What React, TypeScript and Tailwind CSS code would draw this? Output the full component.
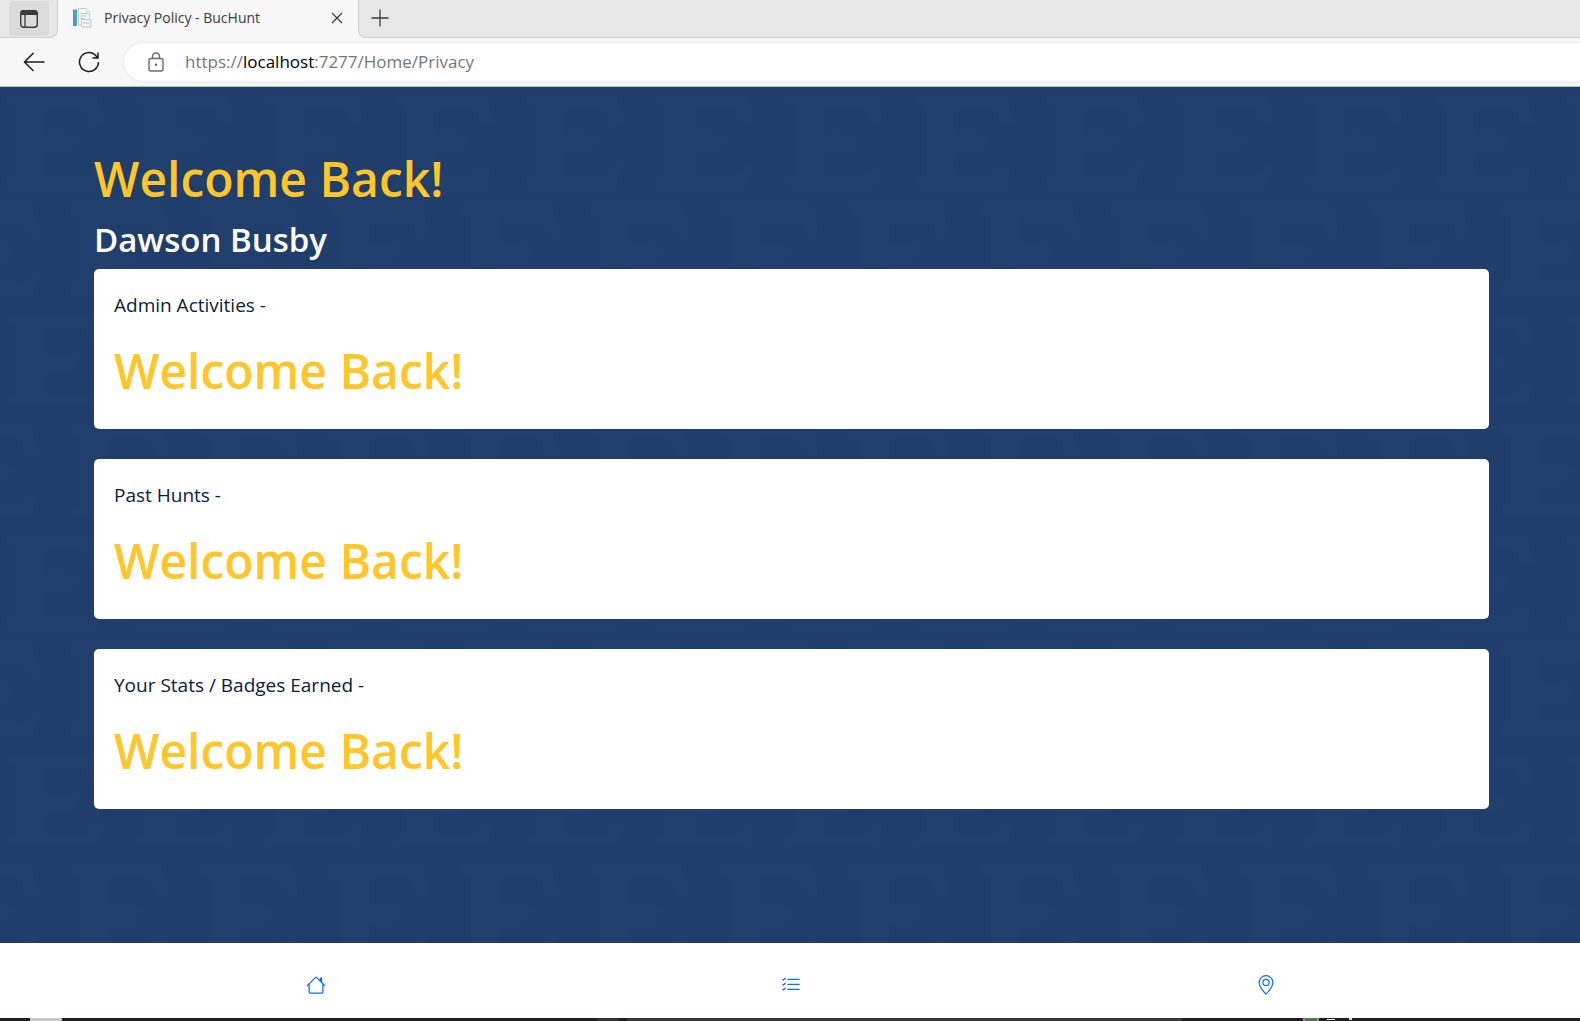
import React from "react";
import { BsHouse, BsListCheck, BsGeoAlt } from "react-icons/bs";

const cards = ["Admin Activities -", "Past Hunts -", "Your Stats / Badges Earned -"];

const tabs = [
  { label: "Home", Icon: BsHouse },
  { label: "Hunts", Icon: BsListCheck },
  { label: "Map", Icon: BsGeoAlt },
];

function TabActionsIcon() {
  return (
    <svg width="20" height="20" viewBox="0 0 20 20" aria-hidden="true">
      <rect x="1.75" y="1.75" width="16.5" height="16.5" rx="3" fill="none" stroke="#3b3b3b" strokeWidth="1.4" />
      <path d="M1.5 6V4a3 3 0 0 1 3-3h11a3 3 0 0 1 3 3v2z" fill="#3b3b3b" />
      <path d="M6 6v12" stroke="#3b3b3b" strokeWidth="1.3" />
    </svg>
  );
}

function PageIcon() {
  return (
    <svg width="20" height="20" viewBox="0 0 20 20" aria-hidden="true">
      <path d="M6.5 .5h8l3 3V17h-11z" fill="#fafafa" stroke="#c9cdd3" />
      <path d="M8.5 5.5h6M8.5 8h6M8.5 10.5h4" stroke="#b9bfc8" />
      <path d="M1 2h4v16H1z" fill="#4a9bd0" />
      <path d="M1 1.5h4" stroke="#a9cfe6" />
      <path d="M9.5 11.5H19V19H9.5z" fill="#f4f4f6" stroke="#c4c7cf" />
      <path d="M11 15h6.5M14.5 3v3h3" fill="none" stroke="#c4c7cf" />
    </svg>
  );
}

function CloseIcon() {
  return (
    <svg width="12" height="12" viewBox="0 0 12 12" fill="none" stroke="#3b3b3b" strokeWidth="1.2" aria-hidden="true">
      <path d="M1 1l10 10M11 1L1 11" />
    </svg>
  );
}

function PlusIcon() {
  return (
    <svg width="18" height="18" viewBox="0 0 18 18" fill="none" stroke="#3b3b3b" strokeWidth="1.3" aria-hidden="true">
      <path d="M9 .5v17M.5 9h17" />
    </svg>
  );
}

function BackIcon() {
  return (
    <svg width="22" height="20" viewBox="0 0 22 20" fill="none" stroke="#1b1b1b" strokeWidth="1.5" aria-hidden="true">
      <path d="M21.5 10H1.5M10.5 1L1.5 10l9 9" />
    </svg>
  );
}

function RefreshIcon() {
  return (
    <svg width="22" height="22" viewBox="0 0 22 22" fill="none" stroke="#1b1b1b" strokeWidth="1.5" aria-hidden="true">
      <path d="M20.5 11a9.5 9.5 0 1 1-4-7.7L19.5 6.5M20 1.5V7h-5.5" />
    </svg>
  );
}

function LockIcon() {
  return (
    <svg width="18" height="20" viewBox="0 0 18 20" fill="none" stroke="#6b6b6b" strokeWidth="1.4" aria-hidden="true">
      <rect x="2" y="6.5" width="14" height="12.5" rx="2" />
      <path d="M5.5 6.5v-2a3.5 3.5 0 0 1 7 0v2" />
      <circle cx="9" cy="12.8" r="1.3" fill="#6b6b6b" stroke="none" />
    </svg>
  );
}

function Backdrop() {
  return (
    <svg className="absolute inset-0 h-full w-full" aria-hidden="true">
      <defs>
        <pattern id="texture" width="130" height="220" patternUnits="userSpaceOnUse">
          <g fill="#203f6c">
            <path d="M5 8h92l8 30H93L83 21H45v26h20l15 5-13 14H45v22h40l18-14-5 25H5v-10h10V18H5z" />
            <path d="M-60 118h92l8 30H28l-10-17h-38v26H0l15 5-13 14h-22v22h40l18-14-5 25h-93z" />
            <path d="M70 118h92l8 30h-12l-10-17h-38v26h20l15 5-13 14h-22v22h40l18-14-5 25H70v-10h10v-70H70z" />
          </g>
        </pattern>
      </defs>
      <rect width="100%" height="100%" fill="url(#texture)" />
    </svg>
  );
}

function Browser() {
  return (
    <header className="border-b border-[#b9bbbd] bg-[#f7f7f7]">
      <div className="flex h-[38px]">
        <div className="flex w-[58px] shrink-0 rounded-br-lg border-r border-b border-[#cfcfcf] bg-[#e7e7e7] pl-[9px]">
          <button aria-label="Tab actions menu" className="mt-px flex h-[35px] w-10 items-center justify-center rounded bg-[#dbdbdb]">
            <TabActionsIcon />
          </button>
        </div>
        <div className="flex w-[300px] shrink-0 items-center pr-[11px] pb-[2px] pl-[14px]">
          <PageIcon />
          <span className="ml-3 flex-1 text-[14px] leading-5 text-[#3b3b3b]">Privacy Policy - BucHunt</span>
          <button aria-label="Close tab" className="flex size-5 items-center justify-center">
            <CloseIcon />
          </button>
        </div>
        <div className="flex flex-1 items-center rounded-bl-lg border-b border-l border-[#cfcfcf] bg-[#e7e7e7] pb-px pl-3">
          <button aria-label="New tab">
            <PlusIcon />
          </button>
        </div>
      </div>
      <div className="flex h-12 items-center">
        <button aria-label="Back" className="ml-[23px]">
          <BackIcon />
        </button>
        <button aria-label="Refresh" className="ml-[33px]">
          <RefreshIcon />
        </button>
        <div className="ml-6 flex h-[38px] flex-1 items-center rounded-l-full bg-white pl-[23px] shadow-[0_0_3px_#dddddd]">
          <LockIcon />
          <a href="https://localhost:7277/Home/Privacy" className="ml-5 text-[17px] leading-6 text-[#767676]">
            https://<span className="text-black">localhost</span>:7277/Home/Privacy
          </a>
        </div>
      </div>
    </header>
  );
}

export default function App() {
  return (
    <div className="flex min-h-screen flex-col font-['Open_Sans','Noto_Sans',sans-serif]">
      <Browser />
      <main className="relative flex-1 bg-[#1f3e6b] pt-[60px] pr-[91px] pb-[60px] pl-[94px]">
        <Backdrop />
        <div className="relative">
          <h1 className="text-[48px] leading-[64px] font-semibold text-[#ffc629]">Welcome Back!</h1>
          <h2 className="mt-2 mb-2 text-[33px] leading-[42px] font-semibold text-white">Dawson Busby</h2>
          <div className="flex flex-col gap-[30px]">
            {cards.map((title) => (
              <section key={title} className="rounded-[5px] bg-white px-5 pt-5 pb-[26px]">
                <p className="text-[19px] leading-8 text-[#041e42]">{title}</p>
                <h2 className="mt-[18px] text-[48px] leading-[64px] font-semibold text-[#ffc629]">Welcome Back!</h2>
              </section>
            ))}
          </div>
        </div>
      </main>
      <nav className="flex h-[75px] bg-white pt-2 pr-[77px] pl-[78px]">
        {tabs.map(({ label, Icon }) => (
          <a key={label} href="#" aria-label={label} className="flex flex-1 items-center justify-center text-[#0d6efd]">
            <Icon size={20} />
          </a>
        ))}
      </nav>
      <div className="flex h-[3px] bg-[#201e1e]">
        <div className="ml-[30px] w-8 bg-[#c8c8c8]" />
        <div className="ml-[535px] w-[22px] bg-[#333333]" />
        <div className="ml-2 w-[555px] bg-[#3a3838]" />
        <div className="ml-[121px] w-4 border-x-2 border-[#999999] bg-[#4f7a50]" />
        <div className="mt-px ml-2 h-px w-2 bg-white" />
        <div className="ml-[14px] h-[2px] w-[3px] bg-[#dddddd]" />
      </div>
    </div>
  );
}
